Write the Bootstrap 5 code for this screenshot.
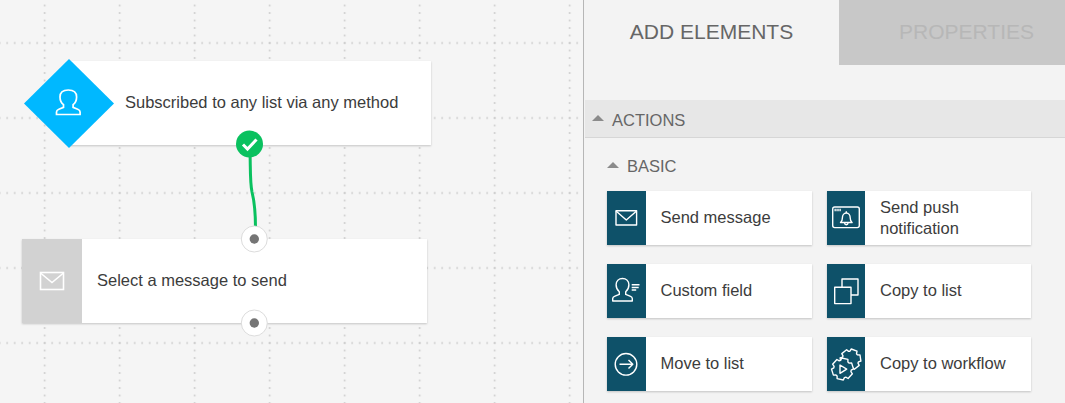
<!DOCTYPE html>
<html lang="en">
<head>
    <meta charset="UTF-8">
    <meta name="viewport" content="width=device-width, initial-scale=1.0">
    <title>Workflow editor</title>
    <link href="https://cdn.jsdelivr.net/npm/bootstrap@5.3.0/dist/css/bootstrap.min.css" rel="stylesheet">
    <style>
        html, body {
            height: 403px;
            overflow: hidden;
        }

        body {
            font-family: "Liberation Sans", Arial, sans-serif;
            font-size: 16.5px;
            color: #3c3c3c;
            background: #f3f3f3;
        }

        .editor-wrap {
            width: 1065px;
            height: 403px;
        }

        /* dotted canvas, lines every 75px and dots every 7.5px */
        .flow-canvas {
            position: relative;
            width: 583px;
            height: 403px;
            flex: none;
            background-color: #f5f5f5;
            background-image:
                radial-gradient(circle, #cecece 1px, transparent 1.15px),
                radial-gradient(circle, #cecece 1px, transparent 1.15px);
            background-size: 7.5px 75px, 75px 7.5px;
            background-position: 3.45px 5.5px, 7.2px 1.75px;
        }

        .flow-node {
            position: absolute;
            background: #fff;
            box-shadow: 0 1px 2px rgba(0, 0, 0, .2);
            display: flex;
            align-items: center;
            padding-bottom: 2px;
        }

        .node-trigger {
            left: 68px;
            top: 61px;
            width: 363px;
            height: 84px;
            padding-left: 57px;
        }

        .node-send {
            left: 22px;
            top: 239px;
            width: 405px;
            height: 84px;
        }

        .node-send-icon {
            width: 60px;
            height: 84px;
            background: #d2d2d2;
            margin-right: 15px;
            align-self: flex-start;
        }

        .flow-svg {
            position: absolute;
            left: 0;
            top: 0;
        }

        .side-panel {
            width: 482px;
            height: 403px;
            flex: none;
            overflow: hidden;
            border-left: 1px solid #b6b6b6;
            background: #f3f3f3;
        }

        .tab-strip {
            width: 510px;
            height: 65px;
        }

        .side-tab {
            width: 255px;
            height: 65px;
            font-size: 21px;
            padding-bottom: 2px;
            color: #666;
        }

        .side-tab-off {
            background: #c8c8c8;
            color: #b7b7b7;
        }

        .section-bar {
            height: 38px;
            margin: 35px 0 0 1px;
            padding: 4px 0 0 7px;
            background: #e7e7e7;
            border-bottom: 1px solid #d6d6d6;
            color: #666;
        }

        .section-sub {
            height: 20px;
            margin: 18px 0 15px 23px;
            color: #666;
        }

        .caret-up {
            width: 0;
            height: 0;
            border-left: 6px solid transparent;
            border-right: 6px solid transparent;
            border-bottom: 6px solid #8b8b8b;
            margin-right: 8px;
            margin-top: -2px;
        }

        .section-bar .caret-up {
            margin-top: -6px;
        }

        .element-grid {
            display: grid;
            grid-template-columns: 205px 204px;
            grid-auto-rows: 54px;
            column-gap: 15px;
            row-gap: 19px;
            margin-left: 23px;
        }

        .element-item {
            background: #fff;
            box-shadow: 0 1px 2px rgba(0, 0, 0, .2);
            line-height: 21px;
            padding-bottom: 2px;
        }

        .element-icon {
            width: 39px;
            height: 54px;
            flex: none;
            align-self: flex-start;
            background: #0e5169;
            margin-right: 14.5px;
        }

        .element-icon-narrow {
            width: 38px;
            margin-right: 15px;
        }

        .label-two-lines {
            margin-top: 2px;
        }

        .element-grid svg {
            display: block;
        }

        .icon-line {
            fill: none;
            stroke: #fff;
            stroke-width: 1.4;
            stroke-linejoin: round;
        }

        .gear-front {
            fill: #0e5169;
        }
    </style>
</head>
<body>

    <div class="editor-wrap d-flex">

        <!-- Canvas -->
        <div class="flow-canvas">
            <div class="flow-node node-trigger">Subscribed to any list via any method</div>

            <div class="flow-node node-send">
                <div class="node-send-icon d-flex align-items-center justify-content-center">
                    <svg width="26" height="20" viewBox="0 0 26 20">
                        <rect x="1.500" y="1.500" width="23" height="17" fill="none" stroke="#fff" stroke-width="1.6"/>
                        <path d="M1.500 2 13 11.500 24.500 2" fill="none" stroke="#fff" stroke-width="1.6"/>
                    </svg>
                </div>
                Select a message to send
            </div>

            <svg class="flow-svg" width="583" height="403" viewBox="0 0 583 403">
                <!-- trigger diamond -->
                <polygon points="69,59 114,103.500 69,148 24,103.500" fill="#00b8ff"/>
                <path d="M56.500 114.500v-2.600c0-1.300.8-2.100 2.400-2.700l4.600-1.800v-2.700c-2-1.600-3.500-4.400-3.500-7.800 0-4.200 3-6.900 8.300-6.900s8.300 2.700 8.300 6.900c0 3.400-1.500 6.200-3.500 7.800v2.700l4.600 1.800c1.600.6 2.400 1.400 2.400 2.700v2.600z" fill="none" stroke="#fff" stroke-width="1.700"/>

                <!-- connector -->
                <path d="M250 150C250.500 170 250 183 252 192 254.500 202 255.500 212 255.500 228" fill="none" stroke="#0ac15f" stroke-width="3"/>

                <!-- success mark -->
                <circle cx="249.500" cy="144" r="13.500" fill="#0ac15f"/>
                <path d="M243 144.500l4.500 4.500 9-9.500" fill="none" stroke="#fff" stroke-width="3"/>

                <!-- ports -->
                <circle cx="254.300" cy="239" r="13" fill="#fff" stroke="#dcdcdc"/>
                <circle cx="254.300" cy="239" r="4.700" fill="#757575"/>
                <circle cx="254.300" cy="323" r="13" fill="#fff" stroke="#dcdcdc"/>
                <circle cx="254.300" cy="323" r="4.700" fill="#757575"/>
            </svg>
        </div>

        <!-- Side panel -->
        <div class="side-panel">
            <div class="tab-strip d-flex">
                <div class="side-tab d-flex align-items-center justify-content-center">ADD ELEMENTS</div>
                <div class="side-tab side-tab-off d-flex align-items-center justify-content-center">PROPERTIES</div>
            </div>

            <div class="section-bar d-flex align-items-center">
                <span class="caret-up"></span>ACTIONS
            </div>

            <div class="section-sub d-flex align-items-center">
                <span class="caret-up"></span>BASIC
            </div>

            <div class="element-grid">
                <div class="element-item d-flex align-items-center">
                    <div class="element-icon">
                        <svg width="39" height="54" viewBox="0 0 39 54">
                            <rect class="icon-line" x="9" y="19.700" width="20.600" height="14.300"/>
                            <path class="icon-line" d="M9 20 19.300 29 29.600 20"/>
                        </svg>
                    </div>
                    Send message
                </div>

                <div class="element-item d-flex align-items-center">
                    <div class="element-icon element-icon-narrow">
                        <svg width="38" height="54" viewBox="0 0 38 54">
                            <rect class="icon-line" x="5.700" y="16" width="26.600" height="20.600" rx="2"/>
                            <path d="M7.500 19h6.500" fill="none" stroke="#fff" stroke-width="2.400" stroke-dasharray="1.300 .6"/>
                            <path class="icon-line" d="M13.500 31.500c1.700-1.200 1.900-2.400 1.900-4.800 0-2.600 1.600-4.700 3.900-4.700s3.900 2.100 3.900 4.700c0 2.400.2 3.600 1.900 4.800z"/>
                            <path class="icon-line" d="M17.600 32c.1 2.300 3.300 2.300 3.400 0M19.300 20.300v1.700"/>
                        </svg>
                    </div>
                    <span class="label-two-lines">Send push<br>notification</span>
                </div>

                <div class="element-item d-flex align-items-center">
                    <div class="element-icon">
                        <svg width="39" height="54" viewBox="0 0 39 54">
                            <path class="icon-line" d="M5.700 37v-2.400c0-1.200.7-1.900 2.300-2.500l4.300-1.700v-2.600c-1.800-1.500-3.200-4-3.200-7 0-3.900 2.700-6.300 6.400-6.300s6.400 2.400 6.400 6.300c0 3-1.400 5.500-3.200 7v2.600l4.300 1.700c1.600.6 2.300 1.300 2.300 2.500V37z"/>
                            <path d="M24.700 20.700h7.800M24.700 23.400h7M24.700 26.100h4.500" fill="none" stroke="#fff" stroke-width="1.500"/>
                        </svg>
                    </div>
                    Custom field
                </div>

                <div class="element-item d-flex align-items-center">
                    <div class="element-icon element-icon-narrow">
                        <svg width="38" height="54" viewBox="0 0 38 54">
                            <path class="icon-line" d="M15 23V15h16v16h-7"/>
                            <rect class="icon-line" x="7.700" y="23.300" width="16.300" height="16.300"/>
                        </svg>
                    </div>
                    Copy to list
                </div>

                <div class="element-item d-flex align-items-center">
                    <div class="element-icon">
                        <svg width="39" height="54" viewBox="0 0 39 54">
                            <circle class="icon-line" cx="19" cy="27.300" r="10.800"/>
                            <path class="icon-line" d="M12.500 27.300h13M21.500 23l4.300 4.300-4.300 4.300"/>
                        </svg>
                    </div>
                    Move to list
                </div>

                <div class="element-item d-flex align-items-center">
                    <div class="element-icon element-icon-narrow">
                        <svg width="38" height="54" viewBox="0 0 38 54">
                            <path class="icon-line" id="gearBack"/>
                            <path class="icon-line gear-front" id="gearFront"/>
                            <path class="icon-line" d="M13 28v8.300l6.700-4.200z"/>
                        </svg>
                    </div>
                    Copy to workflow
                </div>
            </div>
        </div>
    </div>

    <script src="https://cdn.jsdelivr.net/npm/bootstrap@5.3.0/dist/js/bootstrap.bundle.min.js"></script>
    <script>
        // outline of a cog, teeth evenly spaced around the centre
        function gearPath(cx, cy, rOut, rIn, teeth, start) {
            var d = "";
            var step = Math.PI * 2 / teeth;
            for (var i = 0; i < teeth; i++) {
                var a = start + i * step;
                var pts = [[rIn, -0.42], [rOut, -0.28], [rOut, 0.28], [rIn, 0.42]];
                pts.forEach(function (p, j) {
                    var t = a + p[1] * step;
                    var x = cx + p[0] * Math.cos(t);
                    var y = cy + p[0] * Math.sin(t);
                    d += (i === 0 && j === 0 ? "M" : "L") + x.toFixed(1) + " " + y.toFixed(1);
                });
            }
            return d + "z";
        }

        document.getElementById("gearBack").setAttribute("d", gearPath(23.500, 22.500, 10.500, 8.300, 6, -1.2));
        document.getElementById("gearFront").setAttribute("d", gearPath(15.500, 32, 11, 8.800, 6, -0.3));
    </script>
</body>
</html>
